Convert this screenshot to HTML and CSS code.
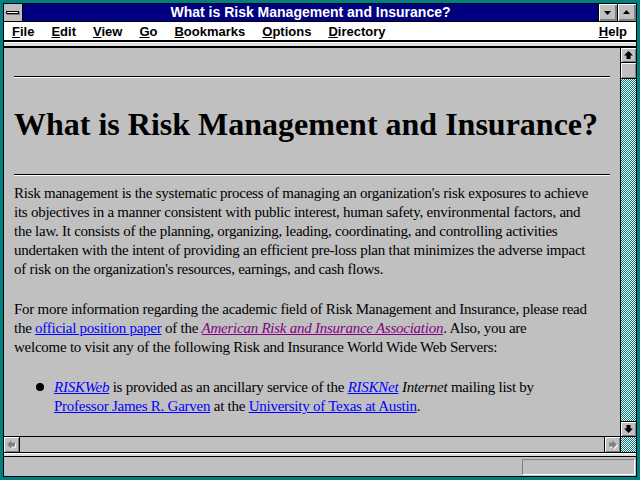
FILE: index.html
```html
<!DOCTYPE html>
<html lang="en">
<head>
    <meta charset="UTF-8">
    <title>What is Risk Management and Insurance?</title>
    <link rel="stylesheet" href="styles.css">
</head>
<body>
    <div class="window">
        <div class="frame">
            <div class="titlebar">
                <div class="sysmenu"><span class="sysbar"></span></div>
                <div class="title">What is Risk Management and Insurance?</div>
                <div class="tbtn">
                    <svg width="18" height="17" viewBox="0 0 18 17"><polygon points="5,7 12,7 8.5,11" fill="#000"/></svg>
                </div>
                <div class="tbtn">
                    <svg width="18" height="17" viewBox="0 0 18 17"><polygon points="5,10 12,10 8.5,6" fill="#000"/></svg>
                </div>
            </div>

            <div class="menubar">
                <span><u>F</u>ile</span>
                <span><u>E</u>dit</span>
                <span><u>V</u>iew</span>
                <span><u>G</u>o</span>
                <span><u>B</u>ookmarks</span>
                <span><u>O</u>ptions</span>
                <span><u>D</u>irectory</span>
                <span class="help"><u>H</u>elp</span>
            </div>
            <div class="toolsep"></div>

            <div class="main">
                <div class="page">
                    <hr>
                    <h1>What is Risk Management and Insurance?</h1>
                    <hr>
                    <p class="intro">Risk management is the systematic process of managing an organization's risk exposures to achieve<br>
                    its objectives in a manner consistent with public interest, human safety, environmental factors, and<br>
                    the law. It consists of the planning, organizing, leading, coordinating, and controlling activities<br>
                    undertaken with the intent of providing an efficient pre-loss plan that minimizes the adverse impact<br>
                    of risk on the organization's resources, earnings, and cash flows.</p>
                    <p>For more information regarding the academic field of Risk Management and Insurance, please read<br>
                    the <a href="#">official position paper</a> of the <a href="#" class="visited"><i>American Risk and Insurance Association</i></a>. Also, you are<br>
                    welcome to visit any of the following Risk and Insurance World Wide Web Servers:</p>
                    <ul>
                        <li><a href="#"><i>RISKWeb</i></a> is provided as an ancillary service of the <a href="#"><i>RISKNet</i></a> <i>Internet</i> mailing list by<br>
                        <a href="#">Professor James R. Garven</a> at the <a href="#">University of Texas at Austin</a>.</li>
                    </ul>
                </div>
                <div class="vscroll">
                    <div class="sbtn up">
                        <svg width="15" height="14" viewBox="0 0 15 14"><polygon points="7.5,3 12,7.5 9.5,7.5 9.5,11 5.5,11 5.5,7.5 3,7.5" fill="#000"/></svg>
                    </div>
                    <div class="thumb"></div>
                    <div class="track"></div>
                    <div class="sbtn down">
                        <svg width="15" height="14" viewBox="0 0 15 14"><polygon points="7.5,11 12,6.5 9.5,6.5 9.5,3 5.5,3 5.5,6.5 3,6.5" fill="#000"/></svg>
                    </div>
                </div>
            </div>

            <div class="hscroll">
                <div class="hbtn left">
                    <svg width="15" height="15" viewBox="0 0 15 15">
                        <polygon points="4,8.5 8.5,4 8.5,6.5 12,6.5 12,10.5 8.5,10.5 8.5,13" fill="#fff"/>
                        <polygon points="3,7.5 7.5,3 7.5,5.5 11,5.5 11,9.5 7.5,9.5 7.5,12" fill="#808080"/>
                    </svg>
                </div>
                <div class="htrack"></div>
                <div class="hbtn right">
                    <svg width="15" height="15" viewBox="0 0 15 15">
                        <polygon points="13,8.5 8.5,4 8.5,6.5 5,6.5 5,10.5 8.5,10.5 8.5,13" fill="#fff"/>
                        <polygon points="12,7.5 7.5,3 7.5,5.5 4,5.5 4,9.5 7.5,9.5 7.5,12" fill="#808080"/>
                    </svg>
                </div>
                <div class="corner"></div>
            </div>
            <div class="statussep"></div>
            <div class="status">
                <div class="statusbox"></div>
            </div>
        </div>
    </div>
</body>
</html>
```

FILE: styles.css
```css
body {
    margin: 0;
    background: #008080;
}

.window {
    width: 640px;
    height: 480px;
    padding: 3px;
    box-sizing: border-box;
    background: #008080;
}

.frame {
    height: 100%;
    border: 1px solid #000;
    box-sizing: border-box;
    display: flex;
    flex-direction: column;
    background: #c0c0c0;
}

/* title bar */
.titlebar {
    flex: 0 0 17px;
    display: flex;
    background: #000080;
    border-bottom: 1px solid #000;
}

.sysmenu {
    width: 18px;
    background: #c0c0c0;
    border-right: 1px solid #000;
    display: flex;
    align-items: center;
    justify-content: center;
}

.sysbar {
    width: 11px;
    height: 1px;
    background: #fff;
    border: 1px solid #000;
    box-shadow: 1px 1px 0 #808080;
    margin-left: -1px;
}

.title {
    flex: 1;
    color: #fff;
    font: bold 14px "Liberation Sans", Arial, sans-serif;
    line-height: 17px;
    text-align: center;
}

.tbtn {
    width: 18px;
    border-left: 1px solid #000;
    background: #c0c0c0;
    box-shadow: inset 1px 1px 0 #fff, inset -1px -1px 0 #808080, inset -2px -2px 0 #808080;
}

.tbtn svg {
    display: block;
}

/* menu */
.menubar {
    flex: 0 0 18px;
    display: flex;
    align-items: center;
    gap: 17px;
    padding: 0 9px 0 8px;
    background: #fff;
    border-bottom: 2px solid #000;
    font: bold 13px "Liberation Sans", Arial, sans-serif;
    color: #000;
}

.menubar .help {
    margin-left: auto;
}

.toolsep {
    flex: 0 0 3px;
    background: #dcdcdc;
    border-top: 1px solid #fff;
    border-bottom: 2px solid #000;
}

/* document area */
.main {
    flex: 1;
    min-height: 0;
    display: flex;
}

.page {
    flex: 1;
    overflow: hidden;
    padding: 28px 10px 0;
    font-family: "Liberation Serif", "Times New Roman", serif;
    font-size: 15px;
    letter-spacing: -0.25px;
    line-height: 19px;
    color: #000;
}

hr {
    height: 0;
    margin: 0;
    border: 0;
    border-top: 1px solid #000;
    border-bottom: 1px solid #fff;
}

h1 {
    margin: 28px 0 32px;
    font-size: 32px;
    line-height: 36px;
    font-weight: bold;
    letter-spacing: 0;
}

p {
    margin: 0 0 21px;
}

p.intro {
    margin-top: 8px;
}

a {
    color: #0000ff;
}

a.visited {
    color: #800080;
}

ul {
    margin: 0;
    padding-left: 40px;
    list-style: none;
}

li::before {
    content: '';
    display: inline-block;
    width: 8px;
    height: 8px;
    border-radius: 50%;
    background: #000;
    margin: 0 10px 1px -18px;
}

/* scroll bars */
.vscroll {
    width: 15px;
    border-left: 1px solid #000;
    display: flex;
    flex-direction: column;
}

.sbtn {
    flex: 0 0 14px;
    background: #c0c0c0;
    box-shadow: inset 1px 1px 0 #fff, inset -1px -1px 0 #808080;
}

.sbtn svg,
.hbtn svg {
    display: block;
}

.sbtn.up {
    border-bottom: 1px solid #000;
}

.sbtn.down {
    border-top: 1px solid #000;
}

.thumb {
    flex: 0 0 15px;
    background: #c0c0c0;
    border-bottom: 1px solid #000;
    box-shadow: inset 1px 1px 0 #fff, inset -1px -1px 0 #808080;
}

.track,
.corner {
    background: repeating-conic-gradient(#008080 0 25%, #fff 0 50%) 0 0 / 2px 2px;
}

.track {
    flex: 1;
}

.hscroll {
    flex: 0 0 15px;
    display: flex;
    border-top: 1px solid #000;
}

.hbtn {
    width: 15px;
    background: #c0c0c0;
    box-shadow: inset 1px 1px 0 #fff, inset -1px -1px 0 #808080;
}

.hbtn.left {
    border-right: 1px solid #000;
}

.hbtn.right {
    border-left: 1px solid #000;
}

.htrack {
    flex: 1;
}

.corner {
    width: 15px;
    border-left: 1px solid #000;
}

/* status bar */
.statussep {
    flex: 0 0 3px;
    background: #dcdcdc;
    border-top: 1px solid #000;
    box-shadow: inset 0 1px 0 #fff;
    border-bottom: 1px solid #000;
}

.status {
    flex: 0 0 19px;
    display: flex;
    justify-content: flex-end;
    align-items: flex-start;
}

.statusbox {
    width: 111px;
    height: 14px;
    margin: 2px 1px 0 0;
    border: 1px solid;
    border-color: #808080 #fff #fff #808080;
}
```
